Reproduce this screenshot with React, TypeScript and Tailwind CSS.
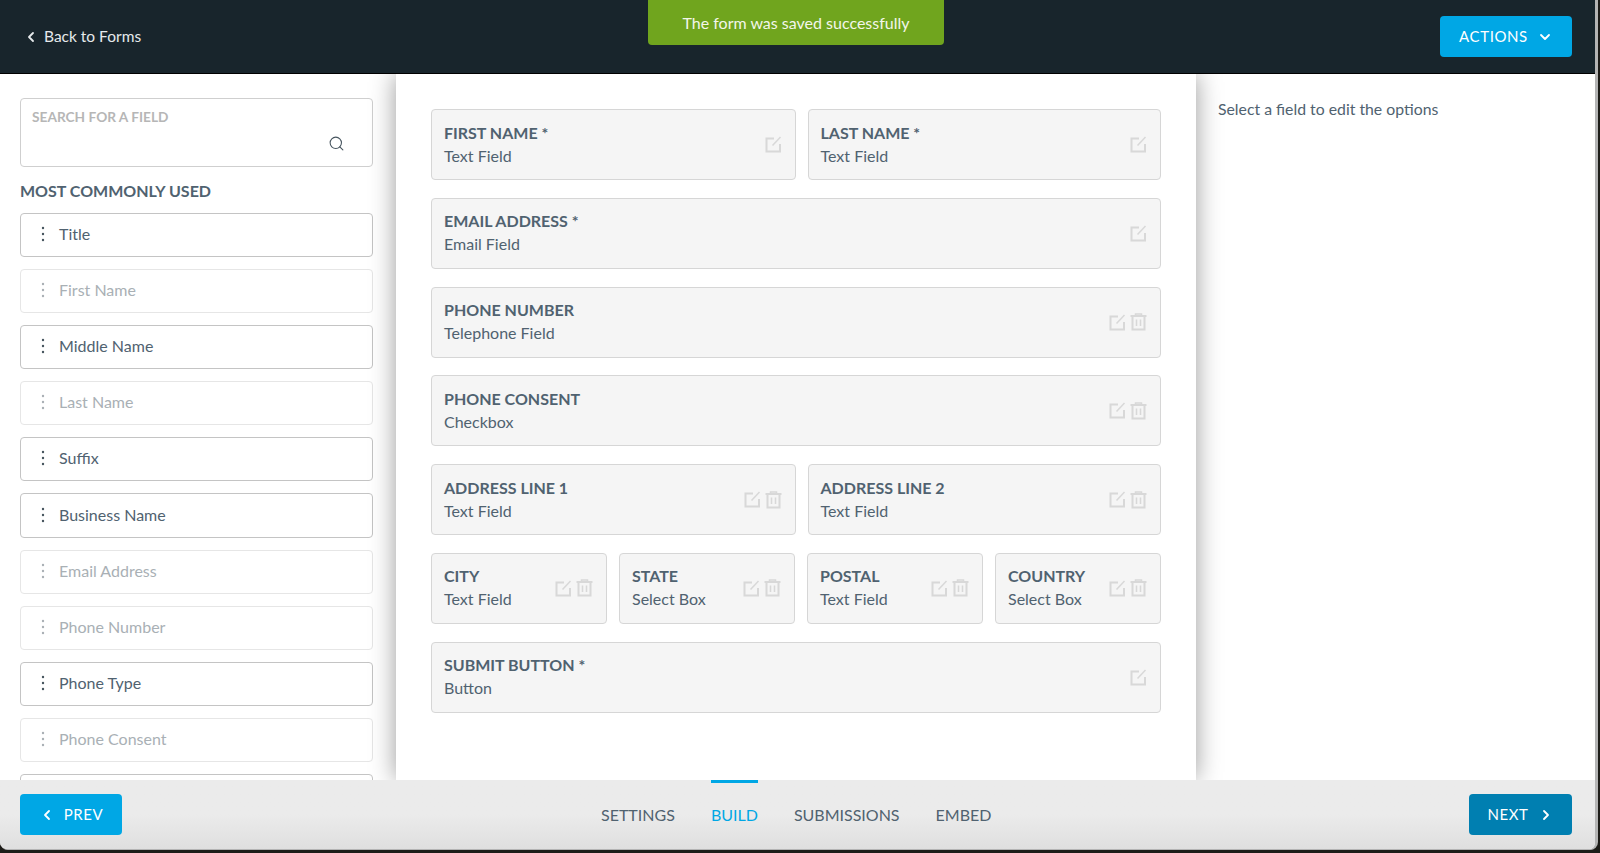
import React from "react";
import { ChevronDown, ChevronLeft, ChevronRight, Search } from "lucide-react";

const EditIcon = () => (
  <svg width="17" height="17" viewBox="0 0 17 17" fill="none" stroke="#d8d8d8" strokeWidth="2" className="shrink-0">
    <path d="M9 2.5H1.5V15.5H15V8" />
    <path d="M7.5 9.5L15.5 1" strokeWidth="1.5" />
  </svg>
);

const TrashIcon = () => (
  <svg width="17" height="18" viewBox="0 0 17 18" fill="none" stroke="#d8d8d8" strokeWidth="2" className="shrink-0">
    <path d="M0.5 3H16.5" />
    <path d="M5.5 3V1H11.5V3" strokeWidth="1.5" />
    <path d="M2.5 3V16.5H14.5V3" />
    <path d="M6.5 6.5V13M10.5 6.5V13" strokeWidth="1.5" />
  </svg>
);

const Dots = ({ faded }: { faded: boolean }) => (
  <svg width="4" height="16" viewBox="0 0 4 16" className="shrink-0" fill={faded ? "#a9b0b5" : "#46545e"}>
    <circle cx="2" cy="2" r="1.2" />
    <circle cx="2" cy="8" r="1.2" />
    <circle cx="2" cy="14" r="1.2" />
  </svg>
);

const sidebarFields = [
  { name: "Title", used: false },
  { name: "First Name", used: true },
  { name: "Middle Name", used: false },
  { name: "Last Name", used: true },
  { name: "Suffix", used: false },
  { name: "Business Name", used: false },
  { name: "Email Address", used: true },
  { name: "Phone Number", used: true },
  { name: "Phone Type", used: false },
  { name: "Phone Consent", used: true },
];

const FieldCard = ({ label, type, removable = true }: { label: string; type: string; removable?: boolean }) => (
  <div className="flex h-[71px] items-center justify-between rounded-[4px] border border-[#d6d6d6] bg-[#f5f5f5] pl-3 pr-[13px]">
    <div className="pb-[2px] text-[16px] leading-[23px] text-[#506270]">
      <div className="font-bold">{label}</div>
      <div>{type}</div>
    </div>
    <div className="flex items-center gap-[4px]">
      <EditIcon />
      {removable && <TrashIcon />}
    </div>
  </div>
);

const tabs = ["SETTINGS", "BUILD", "SUBMISSIONS", "EMBED"];

export default function App() {
  return (
    <div className="h-screen w-full overflow-hidden bg-[#1d1c18] font-['Lato',sans-serif]">
      <div className="flex h-[850px] w-[1598px] flex-col overflow-hidden rounded-b-[8px] border-r-[3px] border-b border-[#b4b4b4] bg-white">
        {/* Header */}
        <header className="relative z-30 flex h-[74px] shrink-0 items-center justify-between border-b border-black bg-[#18252c] pl-[23px] pr-[23px]">
          <div className="flex items-center gap-[5px] text-[15.5px] text-[#e6eaec]">
            <ChevronLeft size={16} strokeWidth={2.75} />
            <span>Back to Forms</span>
          </div>
          <div className="absolute left-[648px] top-0 flex h-[45px] w-[296px] items-center justify-center rounded-b-[4px] bg-[#70a51e] text-[16px] text-[#f3f6ea]">
            The form was saved successfully
          </div>
          <button className="flex h-[41px] w-[132px] items-center justify-center gap-[9px] rounded-[4px] bg-[#00a7e5] text-[15px] tracking-[0.6px] text-white">
            ACTIONS
            <ChevronDown size={16} strokeWidth={2.75} />
          </button>
        </header>

        {/* Body */}
        <main className="flex min-h-0 flex-1">
          <aside className="w-[396px] shrink-0 overflow-hidden pl-5 pr-[23px] pt-[24px]">
            <div className="relative h-[69px] rounded-[4px] border border-[#cfcfcf] pl-[11px] pt-[8px] text-[13.7px] font-bold text-[#b6b6b6]">
              SEARCH FOR A FIELD
              <Search size={17} strokeWidth={1.5} className="absolute right-[27px] top-[36px] text-[#46545e]" />
            </div>
            <h2 className="mb-[11px] mt-[13px] text-[16px] font-bold leading-[21.5px] text-[#506270]">MOST COMMONLY USED</h2>
            <div className="flex flex-col gap-[12px]">
              {sidebarFields.map((f) => (
                <div
                  key={f.name}
                  className={
                    f.used
                      ? "flex h-[44.2px] shrink-0 items-center gap-[14px] rounded-[4px] border border-[#e6e6e6] pb-[2px] pl-5 text-[16px] text-[#a9b0b5]"
                      : "flex h-[44.2px] shrink-0 items-center gap-[14px] rounded-[4px] border border-[#c4c4c4] pb-[2px] pl-5 text-[16px] text-[#506270]"
                  }
                >
                  <Dots faded={f.used} />
                  <span>{f.name}</span>
                </div>
              ))}
              <div className="h-[44.2px] shrink-0 rounded-[4px] border border-[#c4c4c4]" />
            </div>
          </aside>

          <section className="relative z-10 flex w-[800px] shrink-0 flex-col gap-[17.75px] bg-white px-[35px] pt-[35px] shadow-[0_0_24px_rgba(0,0,0,0.4)]">
            <div className="grid grid-cols-[364.5px_1fr] gap-3">
              <FieldCard label="FIRST NAME *" type="Text Field" removable={false} />
              <FieldCard label="LAST NAME *" type="Text Field" removable={false} />
            </div>
            <FieldCard label="EMAIL ADDRESS *" type="Email Field" removable={false} />
            <FieldCard label="PHONE NUMBER" type="Telephone Field" />
            <FieldCard label="PHONE CONSENT" type="Checkbox" />
            <div className="grid grid-cols-[364.5px_1fr] gap-3">
              <FieldCard label="ADDRESS LINE 1" type="Text Field" />
              <FieldCard label="ADDRESS LINE 2" type="Text Field" />
            </div>
            <div className="grid grid-cols-[176px_176px_176px_1fr] gap-3">
              <FieldCard label="CITY" type="Text Field" />
              <FieldCard label="STATE" type="Select Box" />
              <FieldCard label="POSTAL" type="Text Field" />
              <FieldCard label="COUNTRY" type="Select Box" />
            </div>
            <FieldCard label="SUBMIT BUTTON *" type="Button" removable={false} />
          </section>

          <div className="flex-1 pl-[22px] pt-[23px] text-[15.8px] leading-[23px] text-[#506270]">
            Select a field to edit the options
          </div>
        </main>

        {/* Footer */}
        <footer className="relative z-20 flex h-[69px] shrink-0 items-center bg-gradient-to-b from-[#ebebeb] from-50% to-[#dfdfdf] pl-5 pr-[23px]">
          <button className="flex h-[41px] w-[102px] items-center justify-center gap-[9px] rounded-[4px] bg-[#00a7e5] text-[15px] tracking-[0.6px] text-white">
            <ChevronLeft size={16} strokeWidth={2.75} />
            PREV
          </button>
          <nav className="ml-[479px] flex h-full gap-[36px]">
            {tabs.map((t) =>
              t === "BUILD" ? (
                <div key={t} className="flex items-center border-t-[3px] border-[#00a7e5] pb-[3px] text-[16px] text-[#00a7e5]">
                  {t}
                </div>
              ) : (
                <div key={t} className="flex items-center border-t-[3px] border-transparent pb-[3px] text-[16px] text-[#506270]">
                  {t}
                </div>
              )
            )}
          </nav>
          <button className="ml-auto flex h-[41px] w-[103px] items-center justify-center gap-[9px] rounded-[4px] bg-[#007fb1] text-[15px] tracking-[0.6px] text-white">
            NEXT
            <ChevronRight size={16} strokeWidth={2.75} />
          </button>
        </footer>
      </div>
    </div>
  );
}
